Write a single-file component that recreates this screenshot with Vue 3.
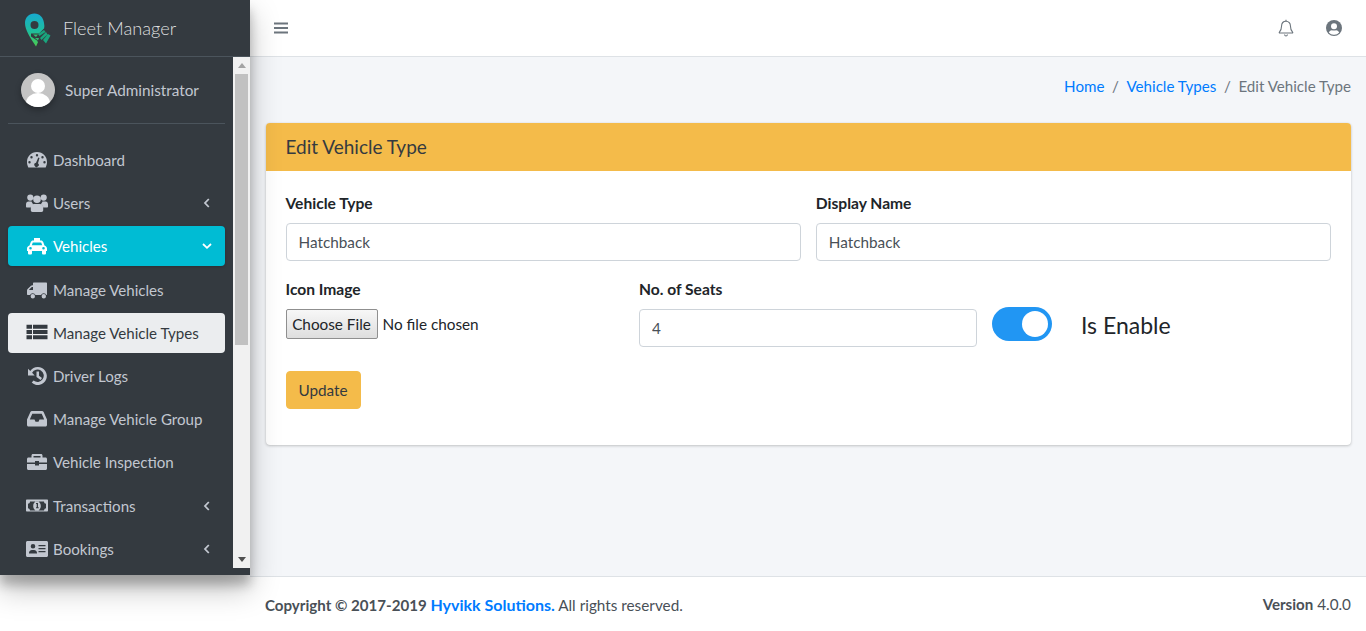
<script setup>
const navItems = [
  { label: "Dashboard", icon: "gauge" },
  { label: "Users", icon: "users", arrow: "left" },
  { label: "Vehicles", icon: "taxi", arrow: "down", state: "active" },
  { label: "Manage Vehicles", icon: "truck", child: true },
  { label: "Manage Vehicle Types", icon: "list", child: true, state: "current" },
  { label: "Driver Logs", icon: "history", child: true },
  { label: "Manage Vehicle Group", icon: "inbox", child: true },
  { label: "Vehicle Inspection", icon: "case", child: true, last: true },
  { label: "Transactions", icon: "money", arrow: "left" },
  { label: "Bookings", icon: "card", arrow: "left" },
];
</script>

<template>
  <div class="layout">
    <aside class="sidebar">
      <div class="brand">
        <svg class="logo" viewBox="0 0 30 34" width="30" height="34">
          <defs>
            <linearGradient id="pin" x1="0" y1="0" x2="0" y2="1">
              <stop offset="0" stop-color="#17a9cf" />
              <stop offset="0.55" stop-color="#1fbf9b" />
              <stop offset="1" stop-color="#4ccb4f" />
            </linearGradient>
          </defs>
          <path fill="url(#pin)" fill-rule="evenodd" d="M10.500 .5C5 .5 1 4.500 1 10c0 7 5.500 15 11 23.500L20 16c.5-2 .5-4 0-6C19.500 4.500 15.500 .5 10.500 .5ZM10.500 8a4 4 0 1 1 0 8 4 4 0 0 1 0-8Z" />
          <path fill="#343a40" d="M7 20.500h8l5-5 8 5-6 12h-6l-3-5-6-4z" />
          <path fill="#1aa57d" d="M14 21l6-4 1.500 2-6 4zM16 25l6-6 1.500 2.500-6 5.500zM19 27l5-6 2.500 1.500-4.500 8z" />
          <path fill="#2fc06f" d="M9 21.500h5l-2 2.500zM11 25h4l-1 2.500z" />
        </svg>
        <span class="brand-text">Fleet Manager</span>
      </div>
      <div class="side-scroll">
        <div class="side-inner">
          <div class="user-panel">
            <span class="avatar">
              <svg viewBox="0 0 34 34" width="34" height="34">
                <circle cx="17" cy="17" r="17" fill="#c4c4c4" />
                <clipPath id="av"><circle cx="17" cy="17" r="17" /></clipPath>
                <g clip-path="url(#av)" fill="#fff">
                  <circle cx="17" cy="13" r="7" />
                  <ellipse cx="17" cy="30" rx="12" ry="10" />
                </g>
              </svg>
            </span>
            <span class="user-name">Super Administrator</span>
          </div>
          <nav class="nav">
            <a
              v-for="item in navItems"
              :key="item.label"
              class="nav-link"
              :class="[item.state, { child: item.child, last: item.last }]"
              href="#"
            >
              <svg class="nav-icon" viewBox="0 0 22 18" width="22" height="18" fill="currentColor">
                <path v-if="item.icon === 'gauge'" fill-rule="evenodd" d="M11 1C5 1 1 5.500 1 11c0 2 .5 3.500 1.300 5.500h17.400c.8-2 1.300-3.500 1.300-5.500C21 5.500 17 1 11 1ZM11 3a1.200 1.200 0 1 1 0 2.400A1.200 1.200 0 0 1 11 3ZM5.500 5a1.200 1.200 0 1 1 0 2.400A1.200 1.200 0 0 1 5.500 5ZM16.500 5a1.200 1.200 0 1 1 0 2.400A1.200 1.200 0 0 1 16.500 5ZM3.500 10a1.200 1.200 0 1 1 0 2.400A1.200 1.200 0 0 1 3.500 10ZM18.500 10a1.200 1.200 0 1 1 0 2.400A1.200 1.200 0 0 1 18.500 10ZM12.300 6.500l1.200.4-1.500 5.300a2.200 2.200 0 1 1-2-.5Z" />
                <path v-else-if="item.icon === 'users'" d="M4.300 .5a3.100 3.100 0 1 1 0 6.200 3.100 3.100 0 0 1 0-6.200ZM17.700 .5a3.100 3.100 0 1 1 0 6.200 3.100 3.100 0 0 1 0-6.200ZM11 1.500a3.800 3.800 0 1 1 0 7.600 3.800 3.800 0 0 1 0-7.600ZM0 10.500C0 8.500 1 7.500 2.500 7.500h3c.3 1 .8 1.700 1.500 2.500-1.300.7-2.200 2-2.400 3.500H1c-.6 0-1-.4-1-1ZM22 10.500c0-2-1-3-2.500-3h-3c-.3 1-.8 1.700-1.500 2.500 1.300.7 2.200 2 2.400 3.500H21c.6 0 1-.4 1-1ZM8 10h6c1.900 0 3.200 1.400 3.200 3.200v3.100c0 .9-.7 1.700-1.700 1.700h-9c-1 0-1.700-.8-1.700-1.700v-3.100C4.800 11.400 6.100 10 8 10Z" />
                <path v-else-if="item.icon === 'taxi'" fill-rule="evenodd" d="M8 1h6v2.500h1c1 0 1.800.6 2.200 1.500l1.300 3.500c1.400.4 2.500 1.700 2.500 3.200V14h-1v2.200c0 .8-.6 1.300-1.300 1.300h-1.400c-.7 0-1.300-.5-1.300-1.300V14H6v2.200c0 .8-.6 1.300-1.300 1.300H3.300c-.7 0-1.300-.5-1.300-1.300V14H1v-2.300C1 10.200 2 8.900 3.500 8.500L4.800 5c.4-.9 1.200-1.500 2.200-1.500h1ZM6.800 5.500 5.800 8.300h10.400l-1-2.800ZM4.500 10a1.300 1.300 0 1 0 0 2.600 1.300 1.300 0 0 0 0-2.600ZM17.500 10a1.300 1.300 0 1 0 0 2.600 1.300 1.300 0 0 0 0-2.600Z" />
                <path v-else-if="item.icon === 'truck'" fill-rule="evenodd" d="M8 1.500h12c.6 0 1 .4 1 1V14h-.5a3 3 0 0 0-5.500 0H9.500a3 3 0 0 0-5.500 0H2c-.6 0-1-.4-1-1V9.500c0-.5.200-1 .6-1.400L5 4.800c.4-.4.900-.6 1.400-.6H7V2.500c0-.6.400-1 1-1ZM5.800 6 3.200 8.600V9H7V6ZM6.800 13a2.200 2.200 0 1 1 0 4.400 2.200 2.200 0 0 1 0-4.400ZM17.800 13a2.200 2.200 0 1 1 0 4.400 2.200 2.200 0 0 1 0-4.400Z" />
                <path v-else-if="item.icon === 'list'" d="M.5 .8h5.500v4H.5ZM7 .8h14.500v4H7ZM.5 6h5.500v4H.5ZM7 6h14.500v4H7ZM.5 11.200h5.500v4H.5ZM7 11.200h14.500v4H7Z" />
                <path v-else-if="item.icon === 'history'" d="M11.800 0a9 9 0 1 1-6.100 15.600l1.900-2.100a6.200 6.200 0 1 0-1.500-7.700l2.600 2.600H2V1.700l2.300 2.300A9 9 0 0 1 11.800 0ZM10.500 4.500h2.500v4.300l3 2.200-1.400 2-4.100-3Z" />
                <path v-else-if="item.icon === 'inbox'" fill-rule="evenodd" d="M6 1h10c.7 0 1.300.4 1.600 1L21 9.500V15c0 .9-.7 1.500-1.500 1.500h-17C1.700 16.500 1 15.900 1 15V9.500l3.400-7.500c.3-.6.900-1 1.600-1ZM6.300 3.800 3.800 9.500h4.700l1 2.200h3l1-2.200h4.700L15.700 3.800Z" />
                <path v-else-if="item.icon === 'case'" d="M7 1h8c.9 0 1.500.7 1.500 1.500V4.500h-2V3h-7v1.500h-2V2.500C5.500 1.700 6.100 1 7 1ZM2.500 4.500h17c.8 0 1.500.7 1.500 1.500v3.500H13V8H9v1.500H1V6c0-.8.700-1.500 1.500-1.500ZM1 11h8v1.500h4V11h8v4.500c0 .8-.7 1.500-1.500 1.500h-17C1.700 17 1 16.300 1 15.500Z" />
                <path v-else-if="item.icon === 'money'" fill-rule="evenodd" d="M1 2.500h20c.6 0 1 .4 1 1v10c0 .6-.4 1-1 1H1c-.6 0-1-.4-1-1v-10c0-.6.400-1 1-1ZM4 4.500c0 1.300-1 2.300-2 2.300v4.400c1 0 2 1 2 2.300h14c0-1.300 1-2.300 2-2.300V6.800c-1 0-2-1-2-2.300ZM11 4.300c2.200 0 3.800 2.100 3.800 4.700s-1.600 4.700-3.800 4.700S7.200 11.600 7.200 9 8.800 4.300 11 4.300ZM10 6v1h.7v3.200H10v1h2.700v-1H12V6Z" />
                <path v-else-if="item.icon === 'card'" fill-rule="evenodd" d="M1.500 1h19c.8 0 1.500.7 1.500 1.500v13c0 .8-.7 1.500-1.500 1.500h-19C.7 17 0 16.300 0 15.500v-13C0 1.700.7 1 1.500 1ZM7 4a2.300 2.300 0 1 0 0 4.600A2.300 2.300 0 0 0 7 4ZM3 13c0-1.600 1.200-3 3-3h2c1.800 0 3 1.400 3 3v.5H3ZM12.500 5v1.300H19.500V5ZM12.500 8v1.300H19.500V8ZM12.500 11v1.300H19.500V11Z" />
              </svg>
              <span class="nav-label">{{ item.label }}</span>
              <svg v-if="item.arrow" class="nav-arrow" viewBox="0 0 10 10" width="10" height="10" fill="none" stroke="currentColor" stroke-width="1.800">
                <path v-if="item.arrow === 'left'" d="M6.800 1 3 5l3.800 4" />
                <path v-else d="M1 3 5 6.800 9 3" />
              </svg>
            </a>
          </nav>
        </div>
        <div class="fake-scrollbar">
          <span class="arrow-up"></span>
          <span class="thumb"></span>
          <span class="arrow-down"></span>
        </div>
      </div>
    </aside>

    <div class="main">
      <header class="topbar">
        <svg viewBox="0 0 14 14" width="14" height="14" fill="#6c757d">
          <path d="M0 1.500h14v2H0ZM0 6h14v2H0ZM0 10.500h14v2H0Z" />
        </svg>
        <div class="top-right">
          <svg viewBox="0 0 16 18" width="16" height="18" fill="none" stroke="#6c757d" stroke-width="1.100">
            <path d="M8 2.200c-2.800 0-4.400 2-4.400 4.600 0 3.600-.9 5-2.300 6.500-.2.300 0 .7.300.7h12.800c.3 0 .5-.4.300-.7-1.400-1.500-2.300-2.900-2.300-6.500 0-2.600-1.600-4.600-4.400-4.600Z" />
            <path d="M8 .8v1.400M6.500 15.500c.2 1 .8 1.500 1.500 1.500s1.300-.5 1.500-1.500" />
          </svg>
          <svg viewBox="0 0 16 16" width="16" height="16">
            <circle cx="8" cy="8" r="8" fill="#6c757d" />
            <circle cx="8" cy="6.300" r="3" fill="#fff" />
            <path fill="#fff" d="M2.800 12.500c.8-1.500 2-2.300 3-2.300.7.300 1.400.4 2.200.4s1.500-.1 2.200-.4c1 0 2.200.8 3 2.300A6.500 6.500 0 0 1 8 14.700a6.500 6.500 0 0 1-5.200-2.200Z" />
          </svg>
        </div>
      </header>

      <main class="content">
        <ol class="breadcrumb">
          <li><a href="#">Home</a></li>
          <li class="sep">/</li>
          <li><a href="#">Vehicle Types</a></li>
          <li class="sep">/</li>
          <li>Edit Vehicle Type</li>
        </ol>
        <section class="card">
          <h3 class="card-title">Edit Vehicle Type</h3>
          <form class="card-body" @submit.prevent>
            <div class="row-two">
              <div>
                <label>Vehicle Type</label>
                <input class="input" type="text" value="Hatchback" />
              </div>
              <div>
                <label>Display Name</label>
                <input class="input" type="text" value="Hatchback" />
              </div>
            </div>
            <div class="row-three">
              <div>
                <label>Icon Image</label>
                <input class="file" type="file" />
              </div>
              <div>
                <label>No. of Seats</label>
                <input class="input" type="text" value="4" />
              </div>
              <div class="enable">
                <span class="switch"><span class="knob"></span></span>
                <span class="enable-text">Is Enable</span>
              </div>
            </div>
            <button class="update" type="submit">Update</button>
          </form>
        </section>
      </main>

      <footer class="footer">
        <div><b>Copyright © 2017-2019 <a href="#">Hyvikk Solutions.</a></b> All rights reserved.</div>
        <div><b>Version</b> 4.0.0</div>
      </footer>
    </div>
  </div>
</template>

<style>
html, body {
  margin: 0;
  overflow: hidden;
}
</style>

<style scoped>
.layout {
  display: grid;
  grid-template-columns: 250px 1fr;
  height: 631px;
  font-family: "Lato", "Liberation Sans", sans-serif;
  font-size: 15.3px;
  color: #212529;
  background: #fff;
}

a {
  text-decoration: none;
  color: #007bff;
}

.sidebar {
  height: 575px;
  background: #343a40;
  box-shadow: 0 14px 28px rgba(0, 0, 0, 0.25), 0 10px 10px rgba(0, 0, 0, 0.22);
  display: flex;
  flex-direction: column;
  position: relative;
  z-index: 2;
}

.brand {
  height: 57px;
  box-sizing: border-box;
  border-bottom: 1px solid #4b545c;
  display: flex;
  align-items: center;
  padding: 0 0 0 24px;
  gap: 9px;
}

.logo {
  margin-top: 4px;
}

.brand-text {
  font-size: 18.2px;
  font-weight: 300;
  color: rgba(255, 255, 255, 0.85);
}

.side-scroll {
  flex: 1;
  display: flex;
  min-height: 0;
}

.side-inner {
  flex: 1;
  padding: 0 8px;
  overflow: hidden;
}

.user-panel {
  height: 66px;
  margin-bottom: 16px;
  border-bottom: 1px solid #4b545c;
  display: flex;
  align-items: center;
  padding: 0 0 0 13px;
  gap: 10px;
}

.avatar {
  height: 34px;
  border-radius: 50%;
  box-shadow: 0 3px 6px rgba(0, 0, 0, 0.3);
}

.user-name {
  color: #c2c7d0;
  margin-top: -1px;
}

.nav {
  display: flex;
  flex-direction: column;
}

.nav-link {
  display: flex;
  align-items: center;
  height: 40px;
  margin-bottom: 3px;
  padding: 0 13px 0 18px;
  gap: 5px;
  border-radius: 4px;
  font-size: 15.1px;
  color: #c2c7d0;
  flex-shrink: 0;
}

.nav-link.active {
  background: #00bcd4;
  color: #fff;
  box-shadow: 0 1px 3px rgba(0, 0, 0, 0.2);
  margin-bottom: 4px;
}

.nav-link.current {
  background: #ebedef;
  color: #343a40;
}

.nav-link.last {
  margin-bottom: 4px;
}

.nav-label {
  flex: 1;
  margin-top: -1px;
  white-space: nowrap;
}

.fake-scrollbar {
  width: 17px;
  background: #f1f1f1;
  display: flex;
  flex-direction: column;
  align-items: center;
  margin-bottom: 7px;
}

.arrow-up,
.arrow-down {
  width: 0;
  height: 0;
  border-left: 4px solid transparent;
  border-right: 4px solid transparent;
  margin: 6px 0;
}

.arrow-up {
  border-bottom: 5px solid #a3a3a3;
}

.arrow-down {
  border-top: 5px solid #505050;
  margin-top: auto;
}

.thumb {
  width: 13px;
  height: 271px;
  background: #c1c1c1;
}

.main {
  display: flex;
  flex-direction: column;
  min-width: 0;
}

.topbar {
  height: 57px;
  box-sizing: border-box;
  border-bottom: 1px solid #dee2e6;
  display: flex;
  align-items: center;
  justify-content: space-between;
  padding: 0 24px;
}

.top-right {
  display: flex;
  align-items: center;
  gap: 32px;
}

.content {
  flex: 1;
  background: #f4f6f9;
  padding: 0 15px;
}

.breadcrumb {
  list-style: none;
  margin: 0;
  padding: 0 0 9px;
  height: 66px;
  box-sizing: border-box;
  display: flex;
  align-items: center;
  justify-content: flex-end;
  gap: 7.6px;
  font-size: 15.15px;
  color: #6c757d;
}

.card {
  background: #fff;
  border-radius: 4px;
  box-shadow: 0 0 1px rgba(0, 0, 0, 0.13), 0 1px 3px rgba(0, 0, 0, 0.2);
  margin: 0 0 0 .5px;
}

.card-title {
  margin: 0;
  height: 48px;
  box-sizing: border-box;
  padding: 0 20px 1px;
  display: flex;
  align-items: center;
  background: #f4bb4a;
  border-radius: 4px 4px 0 0;
  font-size: 19px;
  font-weight: 400;
  color: #343a40;
}

.card-body {
  padding: 20px 20px 36px;
}

label {
  display: block;
  font-size: 15.6px;
  font-weight: 700;
  line-height: 24px;
  margin-bottom: 8px;
}

.input {
  display: block;
  width: 100%;
  height: 38px;
  box-sizing: border-box;
  padding: 0 12px;
  border: 1px solid #ced4da;
  border-radius: 4px;
  font: inherit;
  color: #495057;
  background: #fff;
}

.row-two,
.row-three {
  display: grid;
  column-gap: 15px;
}

.row-two {
  grid-template-columns: 1fr 1fr;
  margin-bottom: 16px;
}

.row-three {
  grid-template-columns: 338.5px 338px 1fr;
  margin-bottom: 24px;
}

.file {
  display: block;
  font: inherit;
  width: 100%;
}

.file::file-selector-button {
  height: 30px;
  width: 92px;
  padding: 0;
  margin-right: 5px;
  border: 1px solid #8f8f8f;
  border-radius: 2px;
  background: linear-gradient(#f7f7f7, #dedede);
  font: inherit;
  color: #212529;
}

.enable {
  display: flex;
  align-items: center;
  align-self: start;
  gap: 29px;
  padding-top: 30px;
}

.switch {
  width: 60px;
  height: 34px;
  border-radius: 17px;
  background: #2196f3;
  position: relative;
}

.knob {
  position: absolute;
  top: 4px;
  right: 4px;
  width: 26px;
  height: 26px;
  border-radius: 50%;
  background: #fff;
}

.enable-text {
  font-size: 23px;
  margin-top: 1px;
}

.update {
  display: block;
  height: 38px;
  width: 75px;
  padding: 0;
  border: 1px solid #f4bb4a;
  border-radius: 4px;
  background: #f4bb4a;
  font: inherit;
  color: #343a40;
}

.footer {
  height: 55px;
  box-sizing: border-box;
  border-top: 1px solid #dee2e6;
  padding: 0 15px;
  display: flex;
  align-items: center;
  justify-content: space-between;
  color: #495057;
  background: #fff;
}

.footer b {
  font-size: 15.1px;
  font-weight: 700;
}

.footer a {
  font-size: 16px;
}
</style>
